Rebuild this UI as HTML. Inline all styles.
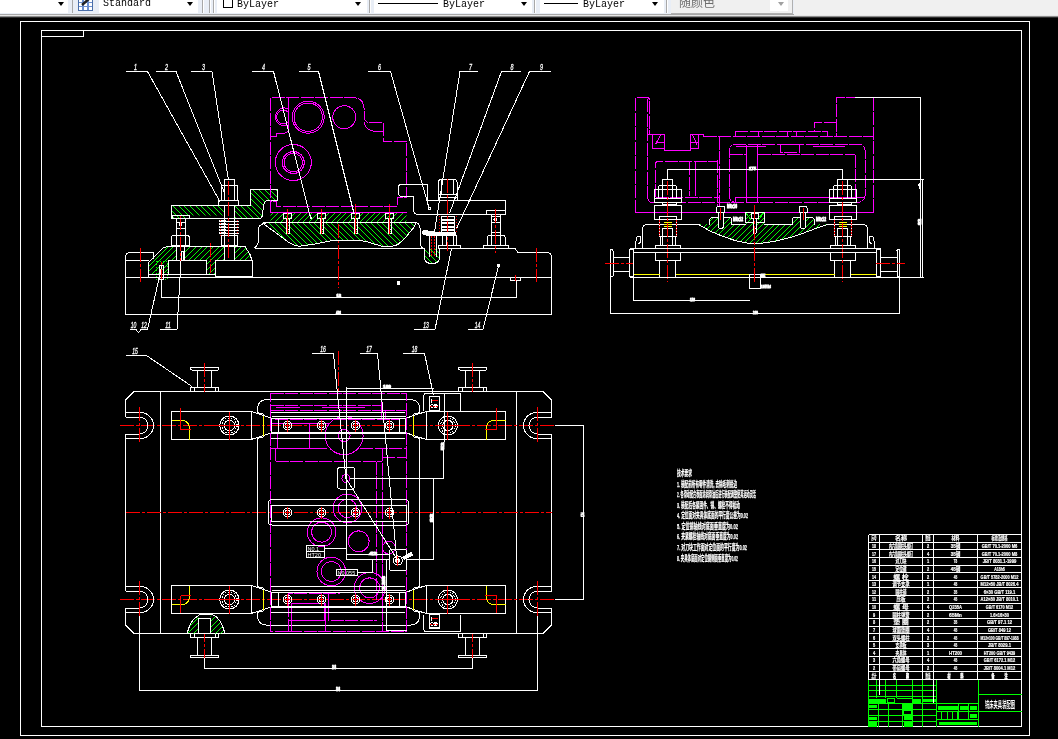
<!DOCTYPE html>
<html lang="zh"><head><meta charset="utf-8"><title>CAD</title>
<style>
html,body{margin:0;padding:0;background:#000;overflow:hidden}
body{width:1058px;height:739px;position:relative;font-family:"Liberation Mono","Noto Sans CJK SC",monospace}
#tb{position:absolute;left:0;top:0;width:1058px;height:15px;background:#f0f0f0;overflow:hidden}
#tbl{position:absolute;left:0;top:0;width:794px;height:14px;background:#e9eef6;border-bottom:1px solid #a8a8a8}
#tbs{position:absolute;left:0;top:15px;width:1058px;height:3px;background:linear-gradient(#e6e6e6 0,#e6e6e6 33.3%,#8c8c8c 33.3%,#8c8c8c 66.6%,#2c2c2c 66.6%)}
.cb{position:absolute;top:-8px;height:21px;background:#fff;border:0 solid #e3e3e3;box-sizing:border-box;font-size:10px;line-height:10px;color:#000;white-space:nowrap}
.cb span{position:absolute;top:7px;filter:grayscale(1)}
.ar{position:absolute;top:2px;width:0;height:0;border-left:3.5px solid transparent;border-right:3.5px solid transparent;border-top:4px solid #000}
.sep{position:absolute;top:0;width:1px;height:13px;background:#a8a8a8}
.ln{position:absolute;top:11px;height:1px;background:#000}
svg{position:absolute;left:0;top:0}
svg path,svg rect,svg circle{fill:none;stroke-width:1;shape-rendering:crispEdges}
svg text{font-family:"Liberation Sans","Noto Sans CJK SC",sans-serif;stroke:none;filter:grayscale(1)}
.w{stroke:#fff}.m{stroke:#f0f}.r{stroke:#f00}.g{stroke:#0f0}.y{stroke:#ff0}
.md{stroke-dasharray:13 1.5}
.cl{stroke-dasharray:14 2 3 2}
.dot{stroke-dasharray:1.5 1.5}
</style></head><body>
<svg width="1058" height="739" viewBox="0 0 1058 739">
<defs>
<pattern id="hf" width="5.5" height="5.5" patternUnits="userSpaceOnUse"><path d="M-1 6.5L6.5 -1M-1 1L1 -1M4.5 6.5L6.5 4.5" style="stroke:#0f0;stroke-width:1;shape-rendering:crispEdges"/></pattern>
<pattern id="hb" width="5.5" height="5.5" patternUnits="userSpaceOnUse"><path d="M-1 -1L6.5 6.5M4.5 -1L6.5 1M-1 4.5L1 6.5" style="stroke:#0f0;stroke-width:1;shape-rendering:crispEdges"/></pattern>
</defs>
<g id="frame">
<rect class="w" x="20.5" y="21.5" width="1009" height="714"/>
<rect class="w" x="41.5" y="30.5" width="980" height="696"/>
<rect class="w" x="41.5" y="30.5" width="42" height="6"/>
</g>
<g id="front">
<clipPath id="hc1"><path d="M171.5 205.5H224V215.5H189.5V218.5H171.5Z M234.5 205.5H250V190.5Q250.5 189.5 252 189.5H277.5V200.5H268Q264 201 263.5 206L262.5 215Q262 218.5 259 218.5H234.5Z" style="stroke:none"/></clipPath>
<path class="g" clip-path="url(#hc1)" d="M133 189L163 219M139 189L169 219M145 189L175 219M150 189L180 219M156 189L186 219M162 189L192 219M167 189L197 219M173 189L203 219M179 189L209 219M184 189L214 219M190 189L220 219M196 189L226 219M201 189L231 219M207 189L237 219M213 189L243 219M218 189L248 219M224 189L254 219M230 189L260 219M235 189L265 219M241 189L271 219M247 189L277 219M252 189L282 219M258 189L288 219M264 189L294 219M269 189L299 219M275 189L305 219M281 189L311 219M286 189L316 219M292 189L322 219M298 189L328 219M303 189L333 219M309 189L339 219M315 189L345 219"/>
<clipPath id="hc2"><path d="M148.5 274V262.5L163 248L167 246.5H176.5V260H168.5V274Z M184.5 246.5H224V260H184.5Z M234.5 246.5H245L250 254.5V260H234.5Z M206 260H215.5V274H206Z" style="stroke:none"/></clipPath>
<path class="g" clip-path="url(#hc2)" d="M111 275L140 246M117 275L146 246M123 275L152 246M128 275L157 246M134 275L163 246M140 275L169 246M145 275L174 246M151 275L180 246M157 275L186 246M162 275L191 246M168 275L197 246M174 275L203 246M179 275L208 246M185 275L214 246M191 275L220 246M196 275L225 246M202 275L231 246M208 275L237 246M213 275L242 246M219 275L248 246M225 275L254 246M230 275L259 246M236 275L265 246M242 275L271 246M247 275L276 246M253 275L282 246M259 275L288 246M264 275L293 246M270 275L299 246M276 275L305 246M281 275L310 246M287 275L316 246"/>
<clipPath id="hc3"><path d="M270.5 212.5H406.5V222.5H270.5Z" style="stroke:none"/></clipPath>
<path class="g" clip-path="url(#hc3)" d="M251 223L262 212M257 223L268 212M263 223L274 212M268 223L279 212M274 223L285 212M280 223L291 212M285 223L296 212M291 223L302 212M297 223L308 212M302 223L313 212M308 223L319 212M314 223L325 212M319 223L330 212M325 223L336 212M331 223L342 212M336 223L347 212M342 223L353 212M348 223L359 212M353 223L364 212M359 223L370 212M365 223L376 212M370 223L381 212M376 223L387 212M382 223L393 212M387 223L398 212M393 223L404 212M399 223L410 212M404 223L415 212M410 223L421 212M416 223L427 212M421 223L432 212"/>
<clipPath id="hc4"><path d="M262.5 222.5L289 242.5Q294 245.5 299.5 246.3L318 243.5Q328 240.5 338.5 240.3H359Q367 241 376 244.6L384.5 246.8Q392 247 398 244.6Q406 238 413.3 228L416.5 222.5Z" style="stroke:none"/></clipPath>
<path class="g" clip-path="url(#hc4)" d="M228 222L254 248M234 222L260 248M240 222L266 248M245 222L271 248M251 222L277 248M257 222L283 248M262 222L288 248M268 222L294 248M274 222L300 248M279 222L305 248M285 222L311 248M291 222L317 248M296 222L322 248M302 222L328 248M308 222L334 248M313 222L339 248M319 222L345 248M325 222L351 248M330 222L356 248M336 222L362 248M342 222L368 248M347 222L373 248M353 222L379 248M359 222L385 248M364 222L390 248M370 222L396 248M376 222L402 248M381 222L407 248M387 222L413 248M393 222L419 248M398 222L424 248M404 222L430 248M410 222L436 248M415 222L441 248M421 222L447 248M427 222L453 248M432 222L458 248M438 222L464 248M444 222L470 248M449 222L475 248"/>
<clipPath id="hc5"><path d="M424.5 248V258Q425 263.5 432 263.5Q439 263.5 439.5 258V248Z" style="stroke:none"/></clipPath>
<path class="g" clip-path="url(#hc5)" d="M399 247L416 264M405 247L422 264M411 247L428 264M416 247L433 264M422 247L439 264M428 247L445 264M433 247L450 264M439 247L456 264M445 247L462 264M450 247L467 264M456 247L473 264M462 247L479 264"/>
<path class="w" d="M125.5 314.5L125.5 256L126.5 253.5L129 252.5L153.5 252.5L153.5 259"/>
<path class="w" d="M125.5 260.5L148.5 260.5"/>
<path class="w" d="M125.5 277.5L551.5 277.5"/>
<path class="w" d="M125.5 314.5L551.5 314.5"/>
<path class="w" d="M161.5 279L161.5 297.5"/>
<path class="w" d="M161.5 297.5L516.5 297.5"/>
<path class="w" d="M516.5 280.5L516.5 297.5"/>
<path class="w" d="M551.5 314.5L551.5 256L550.5 253.5L548 252.5L518 252.5L516.5 250.5L515 248.5L508.5 248.5"/>
<path class="w" d="M254.5 248.5L424.5 248.5"/>
<path class="w" d="M439.5 248.5L460.5 248.5"/>
<path class="w" d="M460.5 248.5L483.5 248.5"/>
<rect class="w" x="510.5" y="277.5" width="10" height="3"/>
<path class="r" d="M515.5 275L515.5 280.5"/>
<path class="w" d="M397 281.5h3 M398.5 281.5v3"/>
<circle class="w" cx="398.2" cy="283.6" r="1.2" style="fill:#fff"/>
<text x="336.5" y="297" font-size="3.57" fill="#fff" textLength="4.5" lengthAdjust="spacingAndGlyphs" font-weight="bold" style="stroke:#fff;stroke-width:.9">18</text>
<text x="336" y="314" font-size="4.29" fill="#fff" textLength="5" lengthAdjust="spacingAndGlyphs" font-weight="bold" style="stroke:#fff;stroke-width:.9">426</text>
<path class="r cl" d="M140.5 248L140.5 282"/>
<path class="r cl" d="M536.5 247.5L536.5 282"/>
<path class="r cl" d="M338.5 224L338.5 288"/>
<path class="r cl" d="M210.5 242.5L210.5 273"/>
<path class="w" d="M148.5 276.5L148.5 262.5L163 248L167 246.5L245 246.5L250 254.5L252.5 262L252.5 276.5"/>
<rect class="w" x="168.5" y="260.5" width="37.5" height="13.5"/>
<rect class="w" x="215.5" y="260.5" width="37" height="16"/>
<path class="w" d="M148.5 274L168.5 274"/>
<path class="w" d="M206 274L215.5 274"/>
<rect class="g dot" x="156.5" y="261" width="10.5" height="18.5"/>
<rect class="w" x="159.5" y="265" width="4" height="14"/>
<path class="r" d="M161.5 262L161.5 279"/>
<rect class="w" x="172.5" y="215.5" width="17" height="3"/>
<rect class="w" x="176.5" y="218.5" width="9" height="16.5"/>
<path class="w" d="M176.5 222L185.5 222"/>
<path class="w" d="M176.5 228L185.5 228"/>
<rect class="w" x="179.5" y="223.5" width="2" height="2"/>
<path class="w" d="M171.5 245.5L171.5 237L173 235L188 235L189.5 237L189.5 245.5Z"/>
<path class="w" d="M176.5 235L176.5 245.5"/>
<path class="w" d="M185.5 235L185.5 245.5"/>
<path class="w" d="M176.5 246.5L176.5 260"/>
<path class="w" d="M184.5 246.5L184.5 260"/>
<rect class="w" x="181.5" y="251.5" width="2" height="8.5"/>
<path class="r cl" d="M180.5 216L180.5 262"/>
<path class="w" d="M171.5 205.5H250V190.5Q250.5 189.5 252 189.5H276Q277.5 189.5 277.5 191V200.5H268Q264 201 263.5 206L262.5 215Q262 218.5 259 218.5H171.5Z"/>
<path class="w" d="M224 185.5V181Q224 179.5 225.5 179.5H233Q234.5 179.5 234.5 181V185.5"/>
<rect class="w" x="221.5" y="185.5" width="15.5" height="14.5"/>
<path class="w" d="M224 185.5L224 200"/>
<path class="w" d="M234.5 185.5L234.5 200"/>
<rect class="w" x="218.5" y="200" width="20" height="5.5"/>
<path class="w" d="M224 205.5L224 218.5"/>
<path class="w" d="M234.5 205.5L234.5 218.5"/>
<path class="w" d="M219.5 220.5L238.5 222"/>
<path class="w" d="M219.5 222L238.5 221.5"/>
<path class="w" d="M219.5 223.5L238.5 225"/>
<path class="w" d="M219.5 225L238.5 224.5"/>
<path class="w" d="M219.5 226.5L238.5 228"/>
<path class="w" d="M219.5 228L238.5 227.5"/>
<path class="w" d="M219.5 229.5L238.5 231"/>
<path class="w" d="M219.5 231L238.5 230.5"/>
<path class="w" d="M219.5 232.5L238.5 234"/>
<path class="w" d="M219.5 234L238.5 233.5"/>
<path class="r dot" d="M220.5 219.5L220.5 235.5"/>
<path class="r dot" d="M237.5 219.5L237.5 235.5"/>
<path class="w" d="M224 218.5L224 235.5"/>
<path class="w" d="M234.5 218.5L234.5 235.5"/>
<rect class="w" x="221.5" y="235.5" width="15.5" height="10"/>
<path class="w" d="M224 235.5L224 245.5"/>
<path class="w" d="M234.5 235.5L234.5 245.5"/>
<rect class="w" x="224" y="246.5" width="10.5" height="13.5"/>
<path class="r cl" d="M228.5 180.5L228.5 258.5"/>
<path class="w" d="M270.5 222.5H267L261.5 224.5Q258 226.5 258 230V243Q257.5 246 254.5 248"/>
<path class="w" d="M262.5 222.5L416.5 222.5"/>
<path class="w" d="M262.5 223L289 242.5Q294 245.5 299.5 246.3L318 243.5Q328 240.5 338.5 240.3H359Q367 241 376 244.6L384.5 246.8Q392 247 398 244.6Q406 238 413.3 228L416.5 222.5"/>
<rect class="w" x="283.5" y="213.5" width="8" height="5"/>
<rect class="w" x="286" y="218.5" width="3" height="15"/>
<path class="w" d="M286 229.5L289 229.5"/>
<path class="r" d="M287.5 208.5L287.5 233.5"/>
<rect class="w" x="317.5" y="213.5" width="8" height="5"/>
<rect class="w" x="320" y="218.5" width="3" height="15"/>
<path class="w" d="M320 229.5L323 229.5"/>
<path class="r" d="M321.5 208.5L321.5 233.5"/>
<rect class="w" x="351.5" y="213.5" width="8" height="5"/>
<rect class="w" x="354" y="218.5" width="3" height="15"/>
<path class="w" d="M354 229.5L357 229.5"/>
<path class="r" d="M355.5 204L355.5 233.5"/>
<rect class="w" x="385.5" y="213.5" width="8" height="5"/>
<rect class="w" x="388" y="218.5" width="3" height="15"/>
<path class="w" d="M388 229.5L391 229.5"/>
<path class="r" d="M389.5 204L389.5 233.5"/>
<path class="m md" d="M270.5 212.5V97.5H353Q363.5 98 364 108V117Q364.5 122 369 122.5H383V141.5H406.5V197.5H397.5V206.5H276.5V201.5H270.5"/>
<path class="m" d="M270.5 212.5L406.5 212.5"/>
<path class="m" d="M288.5 97.5L288.5 130.5"/>
<path class="m" d="M270.5 136.5H276V133.5H283Q287.5 133 288.5 130.5"/>
<path class="m" d="M364 122.5Q366 130 373 131H382.5"/>
<path class="m" d="M289.5 109.5A9 9 0 1 0 288.5 125"/>
<path class="m" d="M288.5 112.5A6.8 6.8 0 1 0 288.5 121.5"/>
<circle class="m" cx="308.2" cy="117.2" r="16"/>
<circle class="m" cx="308.2" cy="117.2" r="14.2"/>
<circle class="m" cx="293.3" cy="162.5" r="18"/>
<circle class="m" cx="293.3" cy="162.5" r="11"/>
<circle class="m" cx="293.3" cy="162.5" r="9.2"/>
<circle class="m" cx="344.3" cy="117.2" r="11.5"/>
<path class="w" d="M427 184.5H401Q398 185 398 188V193Q398.5 196 402 196.5H413.5V210Q414 214.5 418 214.5H486.5V210.5H505.5V200.5H427Z"/>
<rect class="w" x="428" y="207" width="2" height="2"/>
<path class="w" d="M416.5 222.5Q419.5 224 420 228V243.5Q420.5 247 423.5 248.5"/>
<path class="w" d="M438.5 194.5V182Q438.5 179.5 441 179.5H454.5Q457 179.5 457 182V194.5Z"/>
<path class="w" d="M441.5 180L441.5 194.5"/>
<path class="w" d="M453.5 180L453.5 194.5"/>
<rect class="w" x="438.5" y="194.5" width="18.5" height="6"/>
<path class="w" d="M438.5 197L457 197"/>
<rect class="w" x="441.5" y="216.5" width="12.5" height="2.5"/>
<rect class="w" x="441.5" y="220" width="12.5" height="2.5"/>
<rect class="w" x="441.5" y="223.5" width="12.5" height="2.5"/>
<rect class="w" x="441.5" y="227" width="12.5" height="2.5"/>
<rect class="w" x="441.5" y="230.5" width="12.5" height="2.5"/>
<path class="r dot" d="M439.5 215.5L439.5 234"/>
<path class="r dot" d="M456 215.5L456 234"/>
<rect class="w" x="442.5" y="235.5" width="14" height="10"/>
<path class="w" d="M446 235.5L446 245.5"/>
<path class="w" d="M453 235.5L453 245.5"/>
<rect class="w" x="438.5" y="245.5" width="22" height="3"/>
<path class="r cl" d="M447.5 179L447.5 251"/>
<path class="w" d="M422 231.5Q424 230 428 231L437 232.5H455V235.5H437L428 235Q423 235.5 422 233Z" style="fill:#fff"/>
<path class="w" d="M424.5 248V258Q425 263.5 432 263.5Q439 263.5 439.5 258V248"/>
<path class="w" d="M429.5 235L429.5 257"/>
<path class="w" d="M436.5 235L436.5 257"/>
<path class="r dot" d="M431.5 236L431.5 257"/>
<path class="r dot" d="M434.5 236L434.5 257"/>
<rect class="w" x="486.5" y="210.5" width="19" height="4"/>
<rect class="w" x="491" y="214.5" width="9.5" height="20.5"/>
<path class="w" d="M491 216.5L500.5 216.5"/>
<path class="w" d="M491 222.5L500.5 222.5"/>
<path class="w" d="M491 232.5L500.5 232.5"/>
<circle class="w" cx="495.5" cy="219.5" r="1.5"/>
<path class="w" d="M487.5 245.5L487.5 237L489 235L503.5 235L505 237L505 245.5Z"/>
<path class="w" d="M491 235L491 245.5"/>
<path class="w" d="M500.5 235L500.5 245.5"/>
<rect class="w" x="483.5" y="245.5" width="25" height="3"/>
<path class="r cl" d="M495.5 209L495.5 253"/>
<path class="w" d="M125.5 71.5L147.5 71.5"/>
<path class="w" d="M147.5 71.5L220.5 202.5"/>
<text x="135.5" y="70" font-size="9" fill="#fff" text-anchor="middle" font-style="italic" textLength="3" lengthAdjust="spacingAndGlyphs" style="stroke:#fff;stroke-width:.3">1</text>
<path class="w" d="M155.5 71.5L176 71.5"/>
<path class="w" d="M176 71.5L224.5 193"/>
<text x="166.5" y="70" font-size="9" fill="#fff" text-anchor="middle" font-style="italic" textLength="3" lengthAdjust="spacingAndGlyphs" style="stroke:#fff;stroke-width:.3">2</text>
<path class="w" d="M190.5 71.5L212 71.5"/>
<path class="w" d="M212 71.5L228.5 180.5"/>
<text x="203.5" y="70" font-size="9" fill="#fff" text-anchor="middle" font-style="italic" textLength="3" lengthAdjust="spacingAndGlyphs" style="stroke:#fff;stroke-width:.3">3</text>
<path class="w" d="M252 71.5L273.5 71.5"/>
<path class="w" d="M273.5 71.5L310.5 217.5"/>
<text x="263.5" y="70" font-size="9" fill="#fff" text-anchor="middle" font-style="italic" textLength="3" lengthAdjust="spacingAndGlyphs" style="stroke:#fff;stroke-width:.3">4</text>
<path class="w" d="M298.5 71.5L318.5 71.5"/>
<path class="w" d="M318.5 71.5L354 213.5"/>
<text x="309" y="70" font-size="9" fill="#fff" text-anchor="middle" font-style="italic" textLength="3" lengthAdjust="spacingAndGlyphs" style="stroke:#fff;stroke-width:.3">5</text>
<path class="w" d="M368 71.5L390.5 71.5"/>
<path class="w" d="M390.5 71.5L429 208"/>
<text x="379.5" y="70" font-size="9" fill="#fff" text-anchor="middle" font-style="italic" textLength="3" lengthAdjust="spacingAndGlyphs" style="stroke:#fff;stroke-width:.3">6</text>
<path class="w" d="M477.5 71.5L460 71.5"/>
<path class="w" d="M460 71.5L434 235"/>
<text x="470.5" y="70" font-size="9" fill="#fff" text-anchor="middle" font-style="italic" textLength="3" lengthAdjust="spacingAndGlyphs" style="stroke:#fff;stroke-width:.3">7</text>
<path class="w" d="M521 71.5L501.5 71.5"/>
<path class="w" d="M501.5 71.5L449.5 213.5"/>
<text x="512" y="70" font-size="9" fill="#fff" text-anchor="middle" font-style="italic" textLength="3" lengthAdjust="spacingAndGlyphs" style="stroke:#fff;stroke-width:.3">8</text>
<path class="w" d="M551 71.5L529.5 71.5"/>
<path class="w" d="M529.5 71.5L456.5 228.5"/>
<text x="541.5" y="70" font-size="9" fill="#fff" text-anchor="middle" font-style="italic" textLength="3" lengthAdjust="spacingAndGlyphs" style="stroke:#fff;stroke-width:.3">9</text>
<rect x="309.5" y="216.5" width="2" height="2" style="fill:#ffffff;stroke:none"/>
<text x="133.5" y="328" font-size="9" fill="#fff" text-anchor="middle" font-style="italic" textLength="5.6" lengthAdjust="spacingAndGlyphs" style="stroke:#fff;stroke-width:.3">10</text>
<text x="144" y="328" font-size="9" fill="#fff" text-anchor="middle" font-style="italic" textLength="5.6" lengthAdjust="spacingAndGlyphs" style="stroke:#fff;stroke-width:.3">12</text>
<path class="w" d="M129.5 329.5L136 329.5L138.5 332.5L141 329.5L147.5 329.5"/>
<path class="w" d="M147.5 329.5L162 265"/>
<path class="w" d="M159.5 329.5L177 329.5"/>
<path class="w" d="M177 329.5L181.5 253"/>
<text x="168" y="328" font-size="9" fill="#fff" text-anchor="middle" font-style="italic" textLength="5.6" lengthAdjust="spacingAndGlyphs" style="stroke:#fff;stroke-width:.3">11</text>
<path class="w" d="M413.5 329.5L435 329.5"/>
<path class="w" d="M435 329.5L451.5 248.5"/>
<text x="426" y="328" font-size="9" fill="#fff" text-anchor="middle" font-style="italic" textLength="5.6" lengthAdjust="spacingAndGlyphs" style="stroke:#fff;stroke-width:.3">13</text>
<path class="w" d="M467.5 329.5L483 329.5"/>
<path class="w" d="M483 329.5L498.5 266"/>
<text x="477.5" y="328" font-size="9" fill="#fff" text-anchor="middle" font-style="italic" textLength="5.6" lengthAdjust="spacingAndGlyphs" style="stroke:#fff;stroke-width:.3">14</text>
<circle class="w" cx="498.5" cy="265.5" r="1" style="fill:#fff"/>
</g>
<g id="side">
<clipPath id="hc6"><path d="M698.5 224L710 231Q723 237 735 240.5Q746 243.5 755 243.8Q770 243 788.5 238Q802 234 813 229.5L827 224H813.5V219L812 217.5H794L792.5 219V224H764V212.5H745.5V224H731.5V219L730 217.5H711.5L710 219V224Z" style="stroke:none"/></clipPath>
<path class="g" clip-path="url(#hc6)" d="M658 244L690 212M664 244L696 212M670 244L702 212M675 244L707 212M681 244L713 212M687 244L719 212M692 244L724 212M698 244L730 212M704 244L736 212M709 244L741 212M715 244L747 212M721 244L753 212M726 244L758 212M732 244L764 212M738 244L770 212M743 244L775 212M749 244L781 212M755 244L787 212M760 244L792 212M766 244L798 212M772 244L804 212M777 244L809 212M783 244L815 212M789 244L821 212M794 244L826 212M800 244L832 212M806 244L838 212M811 244L843 212M817 244L849 212M823 244L855 212M828 244L860 212M834 244L866 212M840 244L872 212M845 244L877 212M851 244L883 212M857 244L889 212M862 244L894 212"/>
<path class="w" d="M646.5 224.5H698.5L710 231Q723 237 735 240.5Q746 243.5 755 243.8Q770 243 788.5 238Q802 234 813 229.5L827 224.5H863.5"/>
<path class="w" d="M731.5 224.5L745.5 224.5"/>
<path class="w" d="M764 224.5L792.5 224.5"/>
<path class="m md" d="M635.5 212.5V100Q635.5 97.5 638 97.5H647Q649.5 97.5 649.5 100V134"/>
<path class="m md" d="M647.5 99L647.5 199.5"/>
<path class="m md" d="M647.5 197Q648 202 652 202.5H857Q864.5 202 865 196V150Q864.5 145 860 144.5H735Q729.5 145 729.5 150V197Q730 201.5 734 201.5"/>
<path class="m" d="M635.5 212.5L873.5 212.5"/>
<path class="m md" d="M873.5 97.5L873.5 212.5"/>
<path class="m md" d="M873.5 97.5H836.5V136.5"/>
<path class="m md" d="M836.5 122.5H814.5V131.5"/>
<path class="m md" d="M735 131.5L827.5 131.5"/>
<path class="m" d="M735 131.5L735 136.5"/>
<path class="m" d="M758.5 131.5L758.5 136.5"/>
<path class="m" d="M787.5 131.5L787.5 136.5"/>
<path class="m" d="M796.5 131.5L796.5 136.5"/>
<path class="m" d="M827.5 131.5L827.5 136.5"/>
<path class="m md" d="M703.5 136.5L873.5 136.5"/>
<path class="m" d="M647.5 134.5L664.5 134.5"/>
<rect class="m" x="652.5" y="134.5" width="12" height="14"/>
<path class="m" d="M660.5 135L655.5 144.5"/>
<path class="m" d="M655.5 142.5L664.5 142.5"/>
<path class="m" d="M664.5 148.5L665 150.5H690V148.5"/>
<rect class="m" x="690" y="134.5" width="8.5" height="14"/>
<path class="m" d="M692.5 135L697 144.5"/>
<path class="m" d="M690 142.5L698.5 142.5"/>
<path class="m" d="M698.5 134.5H703.5V136.5"/>
<path class="m md" d="M719.5 136.5L719.5 207"/>
<path class="m md" d="M717.5 160L717.5 207"/>
<path class="m md" d="M655.5 197V164Q655.5 161.5 658 161.5H715Q717.5 161.5 717.5 164"/>
<path class="m md" d="M689.5 162L689.5 196"/>
<path class="m" d="M695.5 162L695.5 196"/>
<path class="m md" d="M655.5 197.5L719.5 197.5"/>
<path class="m" d="M735 197.5L865 197.5"/>
<path class="m" d="M746.5 145L746.5 201.5"/>
<path class="m" d="M757.5 145L757.5 201.5"/>
<path class="m md" d="M729.5 154.5L746.5 154.5"/>
<path class="m md" d="M757.5 154.5L855 154.5"/>
<path class="m md" d="M855 154.5L855 197.5"/>
<path class="m" d="M735.5 146.5L765.5 146.5"/>
<rect class="m md" x="780.5" y="144.5" width="19" height="7.5"/>
<path class="m" d="M813 146.5L844.5 146.5"/>
<path class="m" d="M735.5 197.5L735.5 201.5"/>
<path class="w" d="M667.5 169.5L842.5 169.5"/>
<path class="w" d="M667.5 169L667.5 179.5"/>
<path class="w" d="M842.5 169L842.5 179.5"/>
<text x="749" y="169.5" font-size="4.29" fill="#fff" textLength="7" lengthAdjust="spacingAndGlyphs" font-weight="bold" style="stroke:#fff;stroke-width:.9">175</text>
<path class="w" d="M855 97.5L920.5 97.5"/>
<path class="w" d="M920.5 97.5L920.5 277"/>
<path class="w" d="M922.5 179.5L922.5 277"/>
<path class="w" d="M836.5 179.5L924 179.5"/>
<text transform="translate(921 225) rotate(-90)" font-size="4.29" fill="#fff" textLength="6" lengthAdjust="spacingAndGlyphs" font-weight="bold" style="stroke:#fff;stroke-width:.9">82</text>
<path class="w" d="M918.5 185l2 -3v8Z" style="fill:#fff"/>
<rect class="w" x="662.5" y="179.5" width="10" height="5.5"/>
<path class="w" d="M658.5 189L658.5 186.5L660 185L675 185L676.5 186.5L676.5 189"/>
<rect class="w" x="654" y="189.5" width="27" height="12.5"/>
<path class="w" d="M658.5 189.5L658.5 198"/>
<path class="w" d="M676.5 189.5L676.5 198"/>
<path class="w" d="M654 198.5L681 198.5"/>
<rect class="w" x="662.5" y="202.5" width="14" height="1.5"/>
<rect class="w" x="654" y="205.5" width="27" height="14"/>
<rect class="w" x="659" y="216" width="17" height="20"/>
<path class="w" d="M662.5 179.5L662.5 198"/>
<path class="w" d="M672.5 179.5L672.5 198"/>
<path class="y" d="M663.5 222.5L671.5 222.5"/>
<path class="y" d="M663.5 224.5L671.5 224.5"/>
<path class="y" d="M663.5 226.5L671.5 226.5"/>
<path class="r dot" d="M659 220L659 236"/>
<path class="r dot" d="M676 220L676 236"/>
<rect class="w" x="662.5" y="228" width="10" height="8"/>
<path class="w" d="M660 236L660 245.5"/>
<path class="w" d="M662.5 236L662.5 245.5"/>
<path class="w" d="M672.5 236L672.5 245.5"/>
<path class="w" d="M675 236L675 245.5"/>
<rect class="w" x="655" y="245.5" width="25" height="3"/>
<rect class="w" x="655" y="252.5" width="25" height="8"/>
<path class="w" d="M659.5 260.5L659.5 277"/>
<path class="w" d="M675.5 260.5L675.5 277"/>
<path class="r cl" d="M667.5 180.5L667.5 282"/>
<rect class="w" x="837.5" y="179.5" width="10" height="5.5"/>
<path class="w" d="M833.5 189L833.5 186.5L835 185L850 185L851.5 186.5L851.5 189"/>
<rect class="w" x="829" y="189.5" width="27" height="12.5"/>
<path class="w" d="M833.5 189.5L833.5 198"/>
<path class="w" d="M851.5 189.5L851.5 198"/>
<path class="w" d="M829 198.5L856 198.5"/>
<rect class="w" x="837.5" y="202.5" width="14" height="1.5"/>
<rect class="w" x="829" y="205.5" width="27" height="14"/>
<rect class="w" x="834" y="216" width="17" height="20"/>
<path class="w" d="M837.5 179.5L837.5 198"/>
<path class="w" d="M847.5 179.5L847.5 198"/>
<path class="y" d="M838.5 222.5L846.5 222.5"/>
<path class="y" d="M838.5 224.5L846.5 224.5"/>
<path class="y" d="M838.5 226.5L846.5 226.5"/>
<path class="r dot" d="M834 220L834 236"/>
<path class="r dot" d="M851 220L851 236"/>
<rect class="w" x="837.5" y="228" width="10" height="8"/>
<path class="w" d="M835 236L835 245.5"/>
<path class="w" d="M837.5 236L837.5 245.5"/>
<path class="w" d="M847.5 236L847.5 245.5"/>
<path class="w" d="M850 236L850 245.5"/>
<rect class="w" x="830" y="245.5" width="25" height="3"/>
<rect class="w" x="830" y="252.5" width="25" height="8"/>
<path class="w" d="M834.5 260.5L834.5 277"/>
<path class="w" d="M850.5 260.5L850.5 277"/>
<path class="r cl" d="M842.5 180.5L842.5 282"/>
<path class="w" d="M642.5 248.5V229Q643 224.5 647 224.5"/>
<path class="w" d="M635.5 248.5V241 M636 241Q636.5 236 639 236Q641 236 641 240Q640.5 243 638.5 244"/>
<path class="w" d="M867.5 248.5V229Q867 224.5 863 224.5"/>
<path class="w" d="M874.5 248.5V241 M874 241Q873.5 236 871 236Q869 236 869 240Q869.5 243 871.5 244"/>
<path class="w" d="M629.5 248.5L880.5 248.5"/>
<path class="w" d="M633.5 252.5L876.5 252.5"/>
<path class="y" d="M633.5 274.5L659.5 274.5"/>
<path class="y" d="M675.5 274.5L834.5 274.5"/>
<path class="y" d="M850.5 274.5L876.5 274.5"/>
<path class="w" d="M629.5 277.5L924 277.5"/>
<rect class="w" x="629.5" y="249.5" width="4" height="27"/>
<rect class="w" x="613" y="257" width="16.5" height="14.5"/>
<rect class="w" x="610.5" y="249.5" width="2.5" height="27" rx="1"/>
<rect class="w" x="876.5" y="249.5" width="4" height="27"/>
<rect class="w" x="880.5" y="257" width="16.5" height="14.5"/>
<rect class="w" x="897" y="249.5" width="2.5" height="27" rx="1"/>
<path class="r cl" d="M605 263.5L634 263.5"/>
<path class="r cl" d="M876 263.5L905 263.5"/>
<path class="w" d="M633.5 252.5L633.5 300.5"/>
<path class="w" d="M610.5 276L610.5 314"/>
<path class="w" d="M899.5 276L899.5 314"/>
<path class="w" d="M633.5 300.5L750 300.5"/>
<path class="w" d="M610.5 313.5L899.5 313.5"/>
<text x="690" y="300.5" font-size="4.29" fill="#fff" textLength="5" lengthAdjust="spacingAndGlyphs" font-weight="bold" style="stroke:#fff;stroke-width:.9">118</text>
<text x="753" y="313.5" font-size="4.29" fill="#fff" textLength="5" lengthAdjust="spacingAndGlyphs" font-weight="bold" style="stroke:#fff;stroke-width:.9">290</text>
<rect class="w" x="749.5" y="274.5" width="11" height="13.5"/>
<text x="761" y="277" font-size="3.57" fill="#fff" textLength="4" lengthAdjust="spacingAndGlyphs" font-weight="bold" style="stroke:#fff;stroke-width:.9">5</text>
<text x="761" y="288" font-size="4.29" fill="#fff" textLength="10" lengthAdjust="spacingAndGlyphs" font-weight="bold" style="stroke:#fff;stroke-width:.9">18H7/h6</text>
<path class="w" d="M709.8 224.5L709.8 219L711.3 217.5L730.3 217.5L731.8 219L731.8 224.5"/>
<path class="w" d="M716.8 212.5V208Q716.8 206.5 718.3 206.5H723.3Q724.8 206.5 724.8 208V212.5Z" style="fill:#000"/>
<path class="w" d="M718.3 212.5V227L719.3 228.5H722.3L723.3 227V212.5Z" style="fill:#000"/>
<path class="r" d="M720.8 208L720.8 220"/>
<path class="w" d="M792 224.5L792 219L793.5 217.5L812.5 217.5L814 219L814 224.5"/>
<path class="w" d="M799 212.5V208Q799 206.5 800.5 206.5H805.5Q807 206.5 807 208V212.5Z" style="fill:#000"/>
<path class="w" d="M800.5 212.5V227L801.5 228.5H804.5L805.5 227V212.5Z" style="fill:#000"/>
<path class="r" d="M803 208L803 220"/>
<text x="727" y="207.5" font-size="5" fill="#fff" textLength="10" lengthAdjust="spacingAndGlyphs" font-weight="bold" style="stroke:#fff;stroke-width:.9">M6x16</text>
<text x="733" y="220.5" font-size="5" fill="#fff" textLength="10" lengthAdjust="spacingAndGlyphs" font-weight="bold" style="stroke:#fff;stroke-width:.9">M6x12</text>
<text x="816" y="220.5" font-size="5" fill="#fff" textLength="10" lengthAdjust="spacingAndGlyphs" font-weight="bold" style="stroke:#fff;stroke-width:.9">M6x12</text>
<rect class="w" x="745.5" y="212.5" width="18.5" height="10"/>
<path class="g" d="M746 213L751 220"/>
<path class="g" d="M763.5 213L758.5 220"/>
<rect class="w" x="751" y="213" width="7" height="5.5" style="fill:#000"/>
<path class="w" d="M753 218.5V232L754 233.5H755.5L756.5 232V218.5Z" style="fill:#000"/>
<path class="w" d="M753 228.5L756.5 228.5"/>
<path class="r cl" d="M754.5 205L754.5 282"/>
</g>
<g id="plan">
<path class="w" d="M125.5 417V400L134 391.5H543L551.5 400V417 M551.5 434V591 M551.5 608V625L543 633.5H134L125.5 625V608 M125.5 591V434"/>
<path class="w" d="M160.5 391.5L160.5 633.5"/>
<path class="w" d="M516.5 391.5L516.5 633.5"/>
<path class="r cl" d="M120 425.5L555 425.5"/>
<path class="r cl" d="M125.5 512.5L551.5 512.5"/>
<path class="r cl" d="M120 599.5L555 599.5"/>
<path class="r cl" d="M338.5 351L338.5 390.5"/>
<path class="w" d="M125.5 412.5H140.5A13 13 0 0 1 140.5 438.5H125.5"/>
<path class="w" d="M125.5 417H139.5A8.5 8.5 0 0 1 139.5 434H125.5"/>
<path class="r cl" d="M139.5 407L139.5 444"/>
<path class="w" d="M125.5 586.5H140.5A13 13 0 0 1 140.5 612.5H125.5"/>
<path class="w" d="M125.5 591H139.5A8.5 8.5 0 0 1 139.5 608H125.5"/>
<path class="r cl" d="M139.5 581L139.5 618"/>
<path class="w" d="M551.5 412.5H536.5A13 13 0 0 0 536.5 438.5H551.5"/>
<path class="w" d="M551.5 417H537.5A8.5 8.5 0 0 0 537.5 434H551.5"/>
<path class="r cl" d="M537.5 407L537.5 444"/>
<path class="w" d="M551.5 586.5H536.5A13 13 0 0 0 536.5 612.5H551.5"/>
<path class="w" d="M551.5 591H537.5A8.5 8.5 0 0 0 537.5 608H551.5"/>
<path class="r cl" d="M537.5 581L537.5 618"/>
<path class="w" d="M257.5 412.5V409Q258 400 266 399.5H411Q419.5 400 419.5 409V412.5"/>
<path class="w" d="M257.5 612.5V616Q258 624.5 266 625H411Q419.5 624.5 419.5 616V612.5"/>
<path class="w" d="M257.5 438.5L257.5 586.5"/>
<path class="w" d="M419.5 438.5L419.5 586.5"/>
<rect class="w" x="171.5" y="411.5" width="79.5" height="28"/>
<path class="w" d="M251 411.5L263.5 415.5L270.5 418"/>
<path class="w" d="M251 439.5L263.5 435.5L270.5 433"/>
<path class="y" d="M263.5 415.5L263.5 435.5"/>
<path class="w" d="M257.5 412.5L263 414L266 417"/>
<path class="w" d="M257.5 438.5L263 437L266 434"/>
<circle class="w" cx="229.3" cy="425.5" r="9.6"/>
<circle class="w" cx="229.3" cy="425.5" r="5.2"/>
<path class="w dot" d="M237.6 425.5L233.45 432.69L225.15 432.69L221 425.5L225.15 418.31L233.45 418.31Z"/>
<path class="r" d="M229.3 411.5L229.3 439.5"/>
<path class="r" d="M218.3 425.5L240.3 425.5"/>
<rect class="w" x="426.2" y="411.5" width="79.5" height="28"/>
<path class="w" d="M426.2 411.5L413.7 415.5L406.7 418"/>
<path class="w" d="M426.2 439.5L413.7 435.5L406.7 433"/>
<path class="y" d="M413.7 415.5L413.7 435.5"/>
<path class="w" d="M419.7 412.5L414.2 414L411.2 417"/>
<path class="w" d="M419.7 438.5L414.2 437L411.2 434"/>
<circle class="w" cx="447.9" cy="425.5" r="9.6"/>
<circle class="w" cx="447.9" cy="425.5" r="5.2"/>
<path class="w dot" d="M456.2 425.5L452.05 432.69L443.75 432.69L439.6 425.5L443.75 418.31L452.05 418.31Z"/>
<path class="r" d="M447.9 411.5L447.9 439.5"/>
<path class="r" d="M436.9 425.5L458.9 425.5"/>
<rect class="w" x="171.5" y="585.5" width="79.5" height="28"/>
<path class="w" d="M251 585.5L263.5 589.5L270.5 592"/>
<path class="w" d="M251 613.5L263.5 609.5L270.5 607"/>
<path class="y" d="M263.5 589.5L263.5 609.5"/>
<path class="w" d="M257.5 586.5L263 588L266 591"/>
<path class="w" d="M257.5 612.5L263 611L266 608"/>
<circle class="w" cx="229.3" cy="599.5" r="9.6"/>
<circle class="w" cx="229.3" cy="599.5" r="5.2"/>
<path class="w dot" d="M237.6 599.5L233.45 606.69L225.15 606.69L221 599.5L225.15 592.31L233.45 592.31Z"/>
<path class="r" d="M229.3 585.5L229.3 613.5"/>
<path class="r" d="M218.3 599.5L240.3 599.5"/>
<rect class="w" x="426.2" y="585.5" width="79.5" height="28"/>
<path class="w" d="M426.2 585.5L413.7 589.5L406.7 592"/>
<path class="w" d="M426.2 613.5L413.7 609.5L406.7 607"/>
<path class="y" d="M413.7 589.5L413.7 609.5"/>
<path class="w" d="M419.7 586.5L414.2 588L411.2 591"/>
<path class="w" d="M419.7 612.5L414.2 611L411.2 608"/>
<circle class="w" cx="447.9" cy="599.5" r="9.6"/>
<circle class="w" cx="447.9" cy="599.5" r="5.2"/>
<path class="w dot" d="M456.2 599.5L452.05 606.69L443.75 606.69L439.6 599.5L443.75 592.31L452.05 592.31Z"/>
<path class="r" d="M447.9 585.5L447.9 613.5"/>
<path class="r" d="M436.9 599.5L458.9 599.5"/>
<path class="y" d="M171.5 420.5H182.5Q188.5 421 189.5 427.5V439.5"/>
<path class="r" d="M180.5 407.5L180.5 429.5"/>
<path class="r" d="M180.5 429.5L190.5 429.5"/>
<path class="y" d="M505.7 420.5H493.2Q487.2 421 486.2 427.5V439.5"/>
<path class="r" d="M496.7 407.5L496.7 429.5"/>
<path class="r" d="M496.7 429.5L485.2 429.5"/>
<path class="y" d="M171.5 604.5H182.5Q188.5 604 189.5 597.5V585.5"/>
<path class="r" d="M180.5 595.5L180.5 612.5"/>
<path class="r" d="M180.5 595.5L190.5 595.5"/>
<path class="y" d="M505.7 604.5H493.2Q487.2 604 486.2 597.5V585.5"/>
<path class="r" d="M496.7 595.5L496.7 612.5"/>
<path class="r" d="M496.7 595.5L485.2 595.5"/>
<rect class="w" x="190.5" y="387.5" width="28" height="4"/>
<path class="w" d="M197.5 387.5L197.5 370"/>
<path class="w" d="M211.5 387.5L211.5 370"/>
<path class="w" d="M194 391.5L194 387.5"/>
<path class="w" d="M215 391.5L215 387.5"/>
<rect class="w" x="190.5" y="367.5" width="28" height="2.5" rx="1"/>
<path class="r cl" d="M204.5 362.5L204.5 391.5"/>
<rect class="w" x="458.5" y="387.5" width="28" height="4"/>
<path class="w" d="M465.5 387.5L465.5 370"/>
<path class="w" d="M479.5 387.5L479.5 370"/>
<path class="w" d="M462 391.5L462 387.5"/>
<path class="w" d="M483 391.5L483 387.5"/>
<rect class="w" x="458.5" y="367.5" width="28" height="2.5" rx="1"/>
<path class="r cl" d="M472.5 362.5L472.5 391.5"/>
<rect class="w" x="190.5" y="633.5" width="28" height="4"/>
<path class="w" d="M197.5 637.5L197.5 655"/>
<path class="w" d="M211.5 637.5L211.5 655"/>
<path class="w" d="M194 633.5L194 637.5"/>
<path class="w" d="M215 633.5L215 637.5"/>
<rect class="w" x="190.5" y="655" width="28" height="2.5" rx="1"/>
<path class="r cl" d="M204.5 662.5L204.5 633.5"/>
<rect class="w" x="458.5" y="633.5" width="28" height="4"/>
<path class="w" d="M465.5 637.5L465.5 655"/>
<path class="w" d="M479.5 637.5L479.5 655"/>
<path class="w" d="M462 633.5L462 637.5"/>
<path class="w" d="M483 633.5L483 637.5"/>
<rect class="w" x="458.5" y="655" width="28" height="2.5" rx="1"/>
<path class="r cl" d="M472.5 662.5L472.5 633.5"/>
<clipPath id="hc7"><path d="M187.5 633.5L190 626Q192.5 620 198.5 616.5V633.5Z M210.5 633.5V615.5L216 617Q220 620 222.5 626L225 633.5Z" style="stroke:none"/></clipPath>
<path class="g" clip-path="url(#hc7)" d="M160 634L179 615M165 634L184 615M171 634L190 615M176 634L195 615M182 634L201 615M187 634L206 615M193 634L212 615M198 634L217 615M204 634L223 615M209 634L228 615M215 634L234 615M220 634L239 615M226 634L245 615M231 634L250 615M237 634L256 615M242 634L261 615M248 634L267 615"/>
<path class="w" d="M187 633.5L189.5 626Q192 620 197 616.5L200 614.5H212L216 616.5Q220 620 222.5 626L225 633.5"/>
<rect class="w" x="198.5" y="618.5" width="12" height="15"/>
<rect class="m md" x="270.5" y="393.5" width="136" height="238"/>
<path class="m md" d="M270.5 405.5L381.5 405.5"/>
<path class="m md" d="M270.5 410.5L381.5 410.5"/>
<path class="m" d="M276 407.5L300 407.5"/>
<path class="m" d="M322 407.5L365 407.5"/>
<path class="m" d="M381.5 393.5L381.5 420"/>
<path class="m md" d="M381.5 410.5L406.5 410.5"/>
<path class="m" d="M385.5 410.5L385.5 418"/>
<path class="m md" d="M275 419L400 419"/>
<path class="m" d="M272 423L330 423"/>
<path class="m" d="M277.5 433L277.5 448"/>
<path class="m" d="M309.5 423L309.5 448"/>
<path class="m" d="M270.5 448.5L327 448.5"/>
<path class="m md" d="M360 448.5L406 448.5"/>
<path class="m md" d="M275.5 448L275.5 461"/>
<path class="m md" d="M275.5 461.5L382 461.5"/>
<path class="m md" d="M376.5 461.5L376.5 600"/>
<path class="m md" d="M382 448L382 631.5"/>
<path class="m md" d="M382 457L406.5 457"/>
<circle class="m" cx="344.1" cy="435.6" r="19"/>
<circle class="m" cx="344.1" cy="435.6" r="6"/>
<circle class="m" cx="347.4" cy="508.4" r="14.3"/>
<circle class="m" cx="347.4" cy="508.4" r="9.2"/>
<circle class="m" cx="321.6" cy="532.2" r="14.3"/>
<circle class="m" cx="321.6" cy="532.2" r="10"/>
<circle class="m" cx="358.7" cy="541.3" r="10.4"/>
<circle class="m" cx="331.3" cy="571.5" r="14.3"/>
<circle class="m" cx="331.3" cy="571.5" r="10"/>
<circle class="m" cx="388.9" cy="547.7" r="6.4"/>
<circle class="m" cx="369.7" cy="587.9" r="15.5"/>
<circle class="m" cx="369.7" cy="587.9" r="10"/>
<circle class="m" cx="345.9" cy="478.3" r="4"/>
<path class="m md" d="M288.5 631.5V593.5H340"/>
<path class="m" d="M291.5 631.5V603H325V631.5"/>
<path class="m" d="M288.5 620.5L325 620.5"/>
<path class="m md" d="M328.5 593.5V620.5H377"/>
<path class="m md" d="M291.5 603L325 603"/>
<path class="m" d="M324.5 603L324.5 620"/>
<path class="w" d="M270.5 412.5L404.5 412.5"/>
<path class="w" d="M270.5 438.5L404.5 438.5"/>
<path class="w" d="M271.5 416.5L405.5 416.5"/>
<rect x="271.5" y="417.5" width="134" height="1.5" style="fill:#ffffff;stroke:none"/>
<rect x="271.5" y="432" width="134" height="1.5" style="fill:#ffffff;stroke:none"/>
<path class="w" d="M271.5 417.5L271.5 433.5"/>
<path class="w" d="M405.5 417.5L405.5 433.5"/>
<path class="w" d="M278 419L278 432"/>
<path class="w" d="M399 419L399 432"/>
<circle class="w" cx="287.5" cy="425.5" r="4.2"/>
<circle class="w" cx="287.5" cy="425.5" r="2.3"/>
<path class="r" d="M287.5 419.5L287.5 431.5"/>
<path class="r" d="M284.5 425.5L290.5 425.5"/>
<circle class="w" cx="321.4" cy="425.5" r="4.2"/>
<circle class="w" cx="321.4" cy="425.5" r="2.3"/>
<path class="r" d="M321.4 419.5L321.4 431.5"/>
<path class="r" d="M318.4 425.5L324.4 425.5"/>
<circle class="w" cx="355.4" cy="425.5" r="4.2"/>
<circle class="w" cx="355.4" cy="425.5" r="2.3"/>
<path class="r" d="M355.4 419.5L355.4 431.5"/>
<path class="r" d="M352.4 425.5L358.4 425.5"/>
<circle class="w" cx="389.4" cy="425.5" r="4.2"/>
<circle class="w" cx="389.4" cy="425.5" r="2.3"/>
<path class="r" d="M389.4 419.5L389.4 431.5"/>
<path class="r" d="M386.4 425.5L392.4 425.5"/>
<path class="w" d="M270.5 586.5L404.5 586.5"/>
<path class="w" d="M270.5 612.5L404.5 612.5"/>
<path class="w" d="M271.5 590.5L405.5 590.5"/>
<rect x="271.5" y="591.5" width="134" height="1.5" style="fill:#ffffff;stroke:none"/>
<rect x="271.5" y="606" width="134" height="1.5" style="fill:#ffffff;stroke:none"/>
<path class="w" d="M271.5 591.5L271.5 607.5"/>
<path class="w" d="M405.5 591.5L405.5 607.5"/>
<path class="w" d="M278 593L278 606"/>
<path class="w" d="M399 593L399 606"/>
<circle class="w" cx="287.5" cy="599.5" r="4.2"/>
<circle class="w" cx="287.5" cy="599.5" r="2.3"/>
<path class="r" d="M287.5 593.5L287.5 605.5"/>
<path class="r" d="M284.5 599.5L290.5 599.5"/>
<circle class="w" cx="321.4" cy="599.5" r="4.2"/>
<circle class="w" cx="321.4" cy="599.5" r="2.3"/>
<path class="r" d="M321.4 593.5L321.4 605.5"/>
<path class="r" d="M318.4 599.5L324.4 599.5"/>
<circle class="w" cx="355.4" cy="599.5" r="4.2"/>
<circle class="w" cx="355.4" cy="599.5" r="2.3"/>
<path class="r" d="M355.4 593.5L355.4 605.5"/>
<path class="r" d="M352.4 599.5L358.4 599.5"/>
<circle class="w" cx="389.4" cy="599.5" r="4.2"/>
<circle class="w" cx="389.4" cy="599.5" r="2.3"/>
<path class="r" d="M389.4 593.5L389.4 605.5"/>
<path class="r" d="M386.4 599.5L392.4 599.5"/>
<rect class="w" x="268.5" y="499.5" width="140" height="25.5" rx="3"/>
<rect class="w" x="271.5" y="505" width="135" height="16"/>
<circle class="w" cx="287.5" cy="512.5" r="4.2"/>
<circle class="w" cx="287.5" cy="512.5" r="2.3"/>
<path class="r" d="M287.5 506.5L287.5 518.5"/>
<path class="r" d="M284.5 512.5L290.5 512.5"/>
<circle class="w" cx="321.4" cy="512.5" r="4.2"/>
<circle class="w" cx="321.4" cy="512.5" r="2.3"/>
<path class="r" d="M321.4 506.5L321.4 518.5"/>
<path class="r" d="M318.4 512.5L324.4 512.5"/>
<circle class="w" cx="355.4" cy="512.5" r="4.2"/>
<circle class="w" cx="355.4" cy="512.5" r="2.3"/>
<path class="r" d="M355.4 506.5L355.4 518.5"/>
<path class="r" d="M352.4 512.5L358.4 512.5"/>
<circle class="w" cx="389.4" cy="512.5" r="4.2"/>
<circle class="w" cx="389.4" cy="512.5" r="2.3"/>
<path class="r" d="M389.4 506.5L389.4 518.5"/>
<path class="r" d="M386.4 512.5L392.4 512.5"/>
<path class="w" d="M346.5 388.5L433.5 388.5"/>
<path class="w" d="M346.5 386.5L346.5 559.5"/>
<text x="383" y="388" font-size="4.29" fill="#fff" textLength="8" lengthAdjust="spacingAndGlyphs" font-weight="bold" style="stroke:#fff;stroke-width:.9">100</text>
<path class="w" d="M346.5 554.5L390 554.5"/>
<path class="w" d="M346.5 559.5L390 559.5"/>
<text x="369" y="555" font-size="4.29" fill="#fff" textLength="8" lengthAdjust="spacingAndGlyphs" font-weight="bold" style="stroke:#fff;stroke-width:.9">42</text>
<rect class="w" x="337.5" y="467.5" width="17" height="21.5" rx="2.5"/>
<path class="w" d="M350 478.5L443.5 478.5"/>
<path class="w" d="M443.5 442L443.5 478.5"/>
<path class="w" d="M433 478.5L433 559.5"/>
<path class="w" d="M406 559.5L433 559.5"/>
<path class="w" d="M444 394L444 442"/>
<text transform="translate(443.5 450) rotate(-90)" font-size="4.29" fill="#fff" textLength="7.5" lengthAdjust="spacingAndGlyphs" font-weight="bold" style="stroke:#fff;stroke-width:.9">52</text>
<text transform="translate(433 522) rotate(-90)" font-size="4.29" fill="#fff" textLength="8" lengthAdjust="spacingAndGlyphs" font-weight="bold" style="stroke:#fff;stroke-width:.9">82</text>
<rect class="w" x="389.5" y="549.5" width="17" height="21" rx="2"/>
<circle class="w" cx="397.7" cy="560.5" r="4.6"/>
<circle class="w" cx="397.7" cy="560.5" r="2" style="fill:#fff"/>
<path class="r" d="M397.7 556L397.7 566"/>
<path class="w" d="M346 478.5L397.5 560"/>
<path class="w" d="M401 558.5L409 554.5"/>
<path class="w" d="M403 557L411 552.5L412.5 555L404.5 559Z" style="fill:#fff"/>
<rect class="w" x="306.5" y="545.5" width="17.5" height="12"/>
<path class="w" d="M306.5 551.5L324 551.5"/>
<text x="307.5" y="551" font-size="5.5" fill="#ffffff" text-anchor="start">N0.1</text>
<text x="307.5" y="557" font-size="5.5" fill="#ffffff" text-anchor="start">HT20</text>
<path class="w" d="M324 548.5L346.5 548.5"/>
<rect class="w" x="336.5" y="569.5" width="21" height="6"/>
<text x="337.5" y="575" font-size="5.5" fill="#ffffff" text-anchor="start">N0.055</text>
<path class="w" d="M357.5 572.5H372.5V559.5"/>
<text transform="translate(384.5 590) rotate(-90)" font-size="4.29" fill="#fff" textLength="14" lengthAdjust="spacingAndGlyphs" font-weight="bold" style="stroke:#fff;stroke-width:.9">2-M6</text>
<path class="w" d="M386 559.5L386 631"/>
<path class="w" d="M386 630.5L407 630.5"/>
<path class="w" d="M423.5 410.5V395.5Q424 393.5 426 393.5H460.5V410.5"/>
<rect class="w" x="429" y="396.5" width="10.5" height="14"/>
<path class="r" d="M431 400.5L438 400.5"/>
<path class="w" d="M431.5 398.5L431.5 402.5"/>
<circle class="w" cx="435.5" cy="406" r="1.8" style="fill:#fff"/>
<circle class="w" cx="432" cy="406" r="1.2"/>
<path class="r dot" d="M430 406L439 406"/>
<path class="w" d="M423.5 614.5V629.5Q424 631.5 426 631.5H460.5V614.5"/>
<rect class="w" x="429" y="614.5" width="10.5" height="14"/>
<path class="r" d="M431 618.5L438 618.5"/>
<path class="w" d="M431.5 616.5L431.5 620.5"/>
<circle class="w" cx="435.5" cy="624" r="1.8" style="fill:#fff"/>
<circle class="w" cx="432" cy="624" r="1.2"/>
<path class="r dot" d="M430 624L439 624"/>
<path class="w" d="M429 627.5L439.5 627.5"/>
<path class="w" d="M444 394L444 411.5"/>
<path class="w" d="M555 425.5L584 425.5"/>
<path class="w" d="M555 599.5L584 599.5"/>
<path class="w" d="M583.5 425.5L583.5 599.5"/>
<text transform="translate(583.5 517) rotate(-90)" font-size="4.29" fill="#fff" textLength="4.5" lengthAdjust="spacingAndGlyphs" font-weight="bold" style="stroke:#fff;stroke-width:.9">174</text>
<path class="w" d="M204.5 658L204.5 669"/>
<path class="w" d="M472.5 658L472.5 669"/>
<path class="w" d="M204.5 668.5L472.5 668.5"/>
<text x="332" y="668.5" font-size="5" fill="#fff" textLength="4" lengthAdjust="spacingAndGlyphs" font-weight="bold" style="stroke:#fff;stroke-width:.9">268</text>
<path class="w" d="M139.5 616L139.5 690.5"/>
<path class="w" d="M537.5 616L537.5 690.5"/>
<path class="w" d="M139.5 690.5L537.5 690.5"/>
<text x="336" y="690.5" font-size="5" fill="#fff" textLength="4" lengthAdjust="spacingAndGlyphs" font-weight="bold" style="stroke:#fff;stroke-width:.9">398</text>
<path class="w" d="M125.5 355.5L146.5 355.5"/>
<path class="w" d="M146.5 355.5L192 386.5"/>
<text x="135" y="354" font-size="9" fill="#fff" text-anchor="middle" font-style="italic" textLength="5.6" lengthAdjust="spacingAndGlyphs" style="stroke:#fff;stroke-width:.3">15</text>
<path class="w" d="M312 353.5L333.5 353.5"/>
<path class="w" d="M333.5 353.5L346 478.5"/>
<text x="323" y="352" font-size="9" fill="#fff" text-anchor="middle" font-style="italic" textLength="5.6" lengthAdjust="spacingAndGlyphs" style="stroke:#fff;stroke-width:.3">16</text>
<path class="w" d="M360 353.5L377.5 353.5"/>
<path class="w" d="M377.5 353.5L396.5 556"/>
<text x="369" y="352" font-size="9" fill="#fff" text-anchor="middle" font-style="italic" textLength="5.6" lengthAdjust="spacingAndGlyphs" style="stroke:#fff;stroke-width:.3">17</text>
<path class="w" d="M403 353.5L424.5 353.5"/>
<path class="w" d="M424.5 353.5L433.5 395"/>
<text x="414.5" y="352" font-size="9" fill="#fff" text-anchor="middle" font-style="italic" textLength="5.6" lengthAdjust="spacingAndGlyphs" style="stroke:#fff;stroke-width:.3">18</text>
</g>
<g id="table">
<path class="w" d="M868.5 534.5L1021.5 534.5"/>
<path class="w" d="M868.5 542.5L1021.5 542.5"/>
<path class="w" d="M868.5 549.5L1021.5 549.5"/>
<path class="w" d="M868.5 557.5L1021.5 557.5"/>
<path class="w" d="M868.5 565.5L1021.5 565.5"/>
<path class="w" d="M868.5 572.5L1021.5 572.5"/>
<path class="w" d="M868.5 580.5L1021.5 580.5"/>
<path class="w" d="M868.5 587.5L1021.5 587.5"/>
<path class="w" d="M868.5 595.5L1021.5 595.5"/>
<path class="w" d="M868.5 603.5L1021.5 603.5"/>
<path class="w" d="M868.5 610.5L1021.5 610.5"/>
<path class="w" d="M868.5 618.5L1021.5 618.5"/>
<path class="w" d="M868.5 626.5L1021.5 626.5"/>
<path class="w" d="M868.5 633.5L1021.5 633.5"/>
<path class="w" d="M868.5 641.5L1021.5 641.5"/>
<path class="w" d="M868.5 648.5L1021.5 648.5"/>
<path class="w" d="M868.5 656.5L1021.5 656.5"/>
<path class="w" d="M868.5 664.5L1021.5 664.5"/>
<path class="w" d="M868.5 671.5L1021.5 671.5"/>
<path class="w" d="M868.5 679.5L1021.5 679.5"/>
<path class="w" d="M868.5 534.5L868.5 679.5"/>
<path class="w" d="M879.5 534.5L879.5 679.5"/>
<path class="w" d="M922.5 534.5L922.5 679.5"/>
<path class="w" d="M933.5 534.5L933.5 679.5"/>
<path class="w" d="M977.5 534.5L977.5 679.5"/>
<text x="874" y="540.4" font-size="5.6" fill="#fff" text-anchor="middle" textLength="5" lengthAdjust="spacingAndGlyphs" font-weight="bold" style="stroke:#fff;stroke-width:.2">序号</text>
<text x="901" y="540.4" font-size="5.6" fill="#fff" text-anchor="middle" textLength="12" lengthAdjust="spacingAndGlyphs" font-weight="bold" style="stroke:#fff;stroke-width:.2">名称</text>
<text x="928" y="540.4" font-size="5.6" fill="#fff" text-anchor="middle" textLength="5" lengthAdjust="spacingAndGlyphs" font-weight="bold" style="stroke:#fff;stroke-width:.2">数量</text>
<text x="955.5" y="540.4" font-size="5.6" fill="#fff" text-anchor="middle" textLength="8" lengthAdjust="spacingAndGlyphs" font-weight="bold" style="stroke:#fff;stroke-width:.2">材料</text>
<text x="999.5" y="540.4" font-size="5.6" fill="#fff" text-anchor="middle" textLength="16" lengthAdjust="spacingAndGlyphs" font-weight="bold" style="stroke:#fff;stroke-width:.2">标准及规格</text>
<text x="874" y="548.03" font-size="5.6" fill="#fff" text-anchor="middle" textLength="4" lengthAdjust="spacingAndGlyphs" font-weight="bold" style="stroke:#fff;stroke-width:.2">18</text>
<text x="901" y="548.03" font-size="5.6" fill="#fff" text-anchor="middle" textLength="24" lengthAdjust="spacingAndGlyphs" font-weight="bold" style="stroke:#fff;stroke-width:.2">内六角圆柱头螺钉</text>
<text x="928" y="548.03" font-size="5.6" fill="#fff" text-anchor="middle" textLength="2.2" lengthAdjust="spacingAndGlyphs" font-weight="bold" style="stroke:#fff;stroke-width:.2">2</text>
<text x="955.5" y="548.03" font-size="5.6" fill="#fff" text-anchor="middle" textLength="9.6" lengthAdjust="spacingAndGlyphs" font-weight="bold" style="stroke:#fff;stroke-width:.2">35钢</text>
<text x="999.5" y="548.03" font-size="5.6" fill="#fff" text-anchor="middle" textLength="35.7" lengthAdjust="spacingAndGlyphs" font-weight="bold" style="stroke:#fff;stroke-width:.2">GB/T 70.1-2000 M6</text>
<text x="874" y="555.66" font-size="5.6" fill="#fff" text-anchor="middle" textLength="4" lengthAdjust="spacingAndGlyphs" font-weight="bold" style="stroke:#fff;stroke-width:.2">17</text>
<text x="901" y="555.66" font-size="5.6" fill="#fff" text-anchor="middle" textLength="24" lengthAdjust="spacingAndGlyphs" font-weight="bold" style="stroke:#fff;stroke-width:.2">内六角圆柱头螺钉</text>
<text x="928" y="555.66" font-size="5.6" fill="#fff" text-anchor="middle" textLength="2.2" lengthAdjust="spacingAndGlyphs" font-weight="bold" style="stroke:#fff;stroke-width:.2">4</text>
<text x="955.5" y="555.66" font-size="5.6" fill="#fff" text-anchor="middle" textLength="9.6" lengthAdjust="spacingAndGlyphs" font-weight="bold" style="stroke:#fff;stroke-width:.2">35钢</text>
<text x="999.5" y="555.66" font-size="5.6" fill="#fff" text-anchor="middle" textLength="35.7" lengthAdjust="spacingAndGlyphs" font-weight="bold" style="stroke:#fff;stroke-width:.2">GB/T 70.1-2000 M8</text>
<text x="874" y="563.29" font-size="5.6" fill="#fff" text-anchor="middle" textLength="4" lengthAdjust="spacingAndGlyphs" font-weight="bold" style="stroke:#fff;stroke-width:.2">16</text>
<text x="901" y="563.29" font-size="5.6" fill="#fff" text-anchor="middle" textLength="11" lengthAdjust="spacingAndGlyphs" font-weight="bold" style="stroke:#fff;stroke-width:.2">对刀块</text>
<text x="928" y="563.29" font-size="5.6" fill="#fff" text-anchor="middle" textLength="2.2" lengthAdjust="spacingAndGlyphs" font-weight="bold" style="stroke:#fff;stroke-width:.2">1</text>
<text x="955.5" y="563.29" font-size="5.6" fill="#fff" text-anchor="middle" textLength="3.5" lengthAdjust="spacingAndGlyphs" font-weight="bold" style="stroke:#fff;stroke-width:.2">T8</text>
<text x="999.5" y="563.29" font-size="5.6" fill="#fff" text-anchor="middle" textLength="33.6" lengthAdjust="spacingAndGlyphs" font-weight="bold" style="stroke:#fff;stroke-width:.2">JB/T 8031.1-1999</text>
<text x="874" y="570.92" font-size="5.6" fill="#fff" text-anchor="middle" textLength="4" lengthAdjust="spacingAndGlyphs" font-weight="bold" style="stroke:#fff;stroke-width:.2">15</text>
<text x="901" y="570.92" font-size="5.6" fill="#fff" text-anchor="middle" textLength="11" lengthAdjust="spacingAndGlyphs" font-weight="bold" style="stroke:#fff;stroke-width:.2">定位键</text>
<text x="928" y="570.92" font-size="5.6" fill="#fff" text-anchor="middle" textLength="2.2" lengthAdjust="spacingAndGlyphs" font-weight="bold" style="stroke:#fff;stroke-width:.2">2</text>
<text x="955.5" y="570.92" font-size="5.6" fill="#fff" text-anchor="middle" textLength="9.6" lengthAdjust="spacingAndGlyphs" font-weight="bold" style="stroke:#fff;stroke-width:.2">45钢</text>
<text x="999.5" y="570.92" font-size="5.6" fill="#fff" text-anchor="middle" textLength="10.5" lengthAdjust="spacingAndGlyphs" font-weight="bold" style="stroke:#fff;stroke-width:.2">A18h6</text>
<text x="874" y="578.55" font-size="5.6" fill="#fff" text-anchor="middle" textLength="4" lengthAdjust="spacingAndGlyphs" font-weight="bold" style="stroke:#fff;stroke-width:.2">14</text>
<text x="901" y="578.55" font-size="5.6" fill="#fff" text-anchor="middle" textLength="15" lengthAdjust="spacingAndGlyphs" font-weight="bold" style="stroke:#fff;stroke-width:.2">螺 栓</text>
<text x="928" y="578.55" font-size="5.6" fill="#fff" text-anchor="middle" textLength="2.2" lengthAdjust="spacingAndGlyphs" font-weight="bold" style="stroke:#fff;stroke-width:.2">2</text>
<text x="955.5" y="578.55" font-size="5.6" fill="#fff" text-anchor="middle" textLength="3.5" lengthAdjust="spacingAndGlyphs" font-weight="bold" style="stroke:#fff;stroke-width:.2">45</text>
<text x="999.5" y="578.55" font-size="5.6" fill="#fff" text-anchor="middle" textLength="37.8" lengthAdjust="spacingAndGlyphs" font-weight="bold" style="stroke:#fff;stroke-width:.2">GB/T 5782-2000 M12</text>
<text x="874" y="586.18" font-size="5.6" fill="#fff" text-anchor="middle" textLength="4" lengthAdjust="spacingAndGlyphs" font-weight="bold" style="stroke:#fff;stroke-width:.2">13</text>
<text x="901" y="586.18" font-size="5.6" fill="#fff" text-anchor="middle" textLength="17" lengthAdjust="spacingAndGlyphs" font-weight="bold" style="stroke:#fff;stroke-width:.2">调节支承</text>
<text x="928" y="586.18" font-size="5.6" fill="#fff" text-anchor="middle" textLength="2.2" lengthAdjust="spacingAndGlyphs" font-weight="bold" style="stroke:#fff;stroke-width:.2">1</text>
<text x="955.5" y="586.18" font-size="5.6" fill="#fff" text-anchor="middle" textLength="3.5" lengthAdjust="spacingAndGlyphs" font-weight="bold" style="stroke:#fff;stroke-width:.2">45</text>
<text x="999.5" y="586.18" font-size="5.6" fill="#fff" text-anchor="middle" textLength="37.8" lengthAdjust="spacingAndGlyphs" font-weight="bold" style="stroke:#fff;stroke-width:.2">M12×50 JB/T 8026.4</text>
<text x="874" y="593.81" font-size="5.6" fill="#fff" text-anchor="middle" textLength="4" lengthAdjust="spacingAndGlyphs" font-weight="bold" style="stroke:#fff;stroke-width:.2">12</text>
<text x="901" y="593.81" font-size="5.6" fill="#fff" text-anchor="middle" textLength="11" lengthAdjust="spacingAndGlyphs" font-weight="bold" style="stroke:#fff;stroke-width:.2">圆柱销</text>
<text x="928" y="593.81" font-size="5.6" fill="#fff" text-anchor="middle" textLength="2.2" lengthAdjust="spacingAndGlyphs" font-weight="bold" style="stroke:#fff;stroke-width:.2">2</text>
<text x="955.5" y="593.81" font-size="5.6" fill="#fff" text-anchor="middle" textLength="3.5" lengthAdjust="spacingAndGlyphs" font-weight="bold" style="stroke:#fff;stroke-width:.2">35</text>
<text x="999.5" y="593.81" font-size="5.6" fill="#fff" text-anchor="middle" textLength="31.5" lengthAdjust="spacingAndGlyphs" font-weight="bold" style="stroke:#fff;stroke-width:.2">6×30 GB/T 119.1</text>
<text x="874" y="601.44" font-size="5.6" fill="#fff" text-anchor="middle" textLength="4" lengthAdjust="spacingAndGlyphs" font-weight="bold" style="stroke:#fff;stroke-width:.2">11</text>
<text x="901" y="601.44" font-size="5.6" fill="#fff" text-anchor="middle" textLength="9" lengthAdjust="spacingAndGlyphs" font-weight="bold" style="stroke:#fff;stroke-width:.2">压板</text>
<text x="928" y="601.44" font-size="5.6" fill="#fff" text-anchor="middle" textLength="2.2" lengthAdjust="spacingAndGlyphs" font-weight="bold" style="stroke:#fff;stroke-width:.2">2</text>
<text x="955.5" y="601.44" font-size="5.6" fill="#fff" text-anchor="middle" textLength="3.5" lengthAdjust="spacingAndGlyphs" font-weight="bold" style="stroke:#fff;stroke-width:.2">45</text>
<text x="999.5" y="601.44" font-size="5.6" fill="#fff" text-anchor="middle" textLength="37.8" lengthAdjust="spacingAndGlyphs" font-weight="bold" style="stroke:#fff;stroke-width:.2">A12×80 JB/T 8010.1</text>
<text x="874" y="609.07" font-size="5.6" fill="#fff" text-anchor="middle" textLength="4" lengthAdjust="spacingAndGlyphs" font-weight="bold" style="stroke:#fff;stroke-width:.2">10</text>
<text x="901" y="609.07" font-size="5.6" fill="#fff" text-anchor="middle" textLength="15" lengthAdjust="spacingAndGlyphs" font-weight="bold" style="stroke:#fff;stroke-width:.2">螺 母</text>
<text x="928" y="609.07" font-size="5.6" fill="#fff" text-anchor="middle" textLength="2.2" lengthAdjust="spacingAndGlyphs" font-weight="bold" style="stroke:#fff;stroke-width:.2">4</text>
<text x="955.5" y="609.07" font-size="5.6" fill="#fff" text-anchor="middle" textLength="13" lengthAdjust="spacingAndGlyphs" font-weight="bold" style="stroke:#fff;stroke-width:.2">Q235A</text>
<text x="999.5" y="609.07" font-size="5.6" fill="#fff" text-anchor="middle" textLength="27.3" lengthAdjust="spacingAndGlyphs" font-weight="bold" style="stroke:#fff;stroke-width:.2">GB/T 6170 M12</text>
<text x="874" y="616.7" font-size="5.6" fill="#fff" text-anchor="middle" textLength="2.2" lengthAdjust="spacingAndGlyphs" font-weight="bold" style="stroke:#fff;stroke-width:.2">9</text>
<text x="901" y="616.7" font-size="5.6" fill="#fff" text-anchor="middle" textLength="17" lengthAdjust="spacingAndGlyphs" font-weight="bold" style="stroke:#fff;stroke-width:.2">圆柱弹簧</text>
<text x="928" y="616.7" font-size="5.6" fill="#fff" text-anchor="middle" textLength="2.2" lengthAdjust="spacingAndGlyphs" font-weight="bold" style="stroke:#fff;stroke-width:.2">2</text>
<text x="955.5" y="616.7" font-size="5.6" fill="#fff" text-anchor="middle" textLength="12.8" lengthAdjust="spacingAndGlyphs" font-weight="bold" style="stroke:#fff;stroke-width:.2">65Mn</text>
<text x="999.5" y="616.7" font-size="5.6" fill="#fff" text-anchor="middle" textLength="18.9" lengthAdjust="spacingAndGlyphs" font-weight="bold" style="stroke:#fff;stroke-width:.2">1.6×16×30</text>
<text x="874" y="624.33" font-size="5.6" fill="#fff" text-anchor="middle" textLength="2.2" lengthAdjust="spacingAndGlyphs" font-weight="bold" style="stroke:#fff;stroke-width:.2">8</text>
<text x="901" y="624.33" font-size="5.6" fill="#fff" text-anchor="middle" textLength="15" lengthAdjust="spacingAndGlyphs" font-weight="bold" style="stroke:#fff;stroke-width:.2">垫 圈</text>
<text x="928" y="624.33" font-size="5.6" fill="#fff" text-anchor="middle" textLength="2.2" lengthAdjust="spacingAndGlyphs" font-weight="bold" style="stroke:#fff;stroke-width:.2">2</text>
<text x="955.5" y="624.33" font-size="5.6" fill="#fff" text-anchor="middle" textLength="3.5" lengthAdjust="spacingAndGlyphs" font-weight="bold" style="stroke:#fff;stroke-width:.2">35</text>
<text x="999.5" y="624.33" font-size="5.6" fill="#fff" text-anchor="middle" textLength="25.2" lengthAdjust="spacingAndGlyphs" font-weight="bold" style="stroke:#fff;stroke-width:.2">GB/T 97.1 12</text>
<text x="874" y="631.96" font-size="5.6" fill="#fff" text-anchor="middle" textLength="2.2" lengthAdjust="spacingAndGlyphs" font-weight="bold" style="stroke:#fff;stroke-width:.2">7</text>
<text x="901" y="631.96" font-size="5.6" fill="#fff" text-anchor="middle" textLength="17" lengthAdjust="spacingAndGlyphs" font-weight="bold" style="stroke:#fff;stroke-width:.2">球面垫圈</text>
<text x="928" y="631.96" font-size="5.6" fill="#fff" text-anchor="middle" textLength="2.2" lengthAdjust="spacingAndGlyphs" font-weight="bold" style="stroke:#fff;stroke-width:.2">4</text>
<text x="955.5" y="631.96" font-size="5.6" fill="#fff" text-anchor="middle" textLength="3.5" lengthAdjust="spacingAndGlyphs" font-weight="bold" style="stroke:#fff;stroke-width:.2">45</text>
<text x="999.5" y="631.96" font-size="5.6" fill="#fff" text-anchor="middle" textLength="23.1" lengthAdjust="spacingAndGlyphs" font-weight="bold" style="stroke:#fff;stroke-width:.2">GB/T 849 12</text>
<text x="874" y="639.59" font-size="5.6" fill="#fff" text-anchor="middle" textLength="2.2" lengthAdjust="spacingAndGlyphs" font-weight="bold" style="stroke:#fff;stroke-width:.2">6</text>
<text x="901" y="639.59" font-size="5.6" fill="#fff" text-anchor="middle" textLength="17" lengthAdjust="spacingAndGlyphs" font-weight="bold" style="stroke:#fff;stroke-width:.2">双头螺柱</text>
<text x="928" y="639.59" font-size="5.6" fill="#fff" text-anchor="middle" textLength="2.2" lengthAdjust="spacingAndGlyphs" font-weight="bold" style="stroke:#fff;stroke-width:.2">2</text>
<text x="955.5" y="639.59" font-size="5.6" fill="#fff" text-anchor="middle" textLength="3.5" lengthAdjust="spacingAndGlyphs" font-weight="bold" style="stroke:#fff;stroke-width:.2">45</text>
<text x="999.5" y="639.59" font-size="5.6" fill="#fff" text-anchor="middle" textLength="38" lengthAdjust="spacingAndGlyphs" font-weight="bold" style="stroke:#fff;stroke-width:.2">M12×100 GB/T 897-1988</text>
<text x="874" y="647.22" font-size="5.6" fill="#fff" text-anchor="middle" textLength="2.2" lengthAdjust="spacingAndGlyphs" font-weight="bold" style="stroke:#fff;stroke-width:.2">5</text>
<text x="901" y="647.22" font-size="5.6" fill="#fff" text-anchor="middle" textLength="11" lengthAdjust="spacingAndGlyphs" font-weight="bold" style="stroke:#fff;stroke-width:.2">支承板</text>
<text x="928" y="647.22" font-size="5.6" fill="#fff" text-anchor="middle" textLength="2.2" lengthAdjust="spacingAndGlyphs" font-weight="bold" style="stroke:#fff;stroke-width:.2">3</text>
<text x="955.5" y="647.22" font-size="5.6" fill="#fff" text-anchor="middle" textLength="3.5" lengthAdjust="spacingAndGlyphs" font-weight="bold" style="stroke:#fff;stroke-width:.2">45</text>
<text x="999.5" y="647.22" font-size="5.6" fill="#fff" text-anchor="middle" textLength="23.1" lengthAdjust="spacingAndGlyphs" font-weight="bold" style="stroke:#fff;stroke-width:.2">JB/T 8029.1</text>
<text x="874" y="654.85" font-size="5.6" fill="#fff" text-anchor="middle" textLength="2.2" lengthAdjust="spacingAndGlyphs" font-weight="bold" style="stroke:#fff;stroke-width:.2">4</text>
<text x="901" y="654.85" font-size="5.6" fill="#fff" text-anchor="middle" textLength="11" lengthAdjust="spacingAndGlyphs" font-weight="bold" style="stroke:#fff;stroke-width:.2">夹具体</text>
<text x="928" y="654.85" font-size="5.6" fill="#fff" text-anchor="middle" textLength="2.2" lengthAdjust="spacingAndGlyphs" font-weight="bold" style="stroke:#fff;stroke-width:.2">1</text>
<text x="955.5" y="654.85" font-size="5.6" fill="#fff" text-anchor="middle" textLength="13" lengthAdjust="spacingAndGlyphs" font-weight="bold" style="stroke:#fff;stroke-width:.2">HT200</text>
<text x="999.5" y="654.85" font-size="5.6" fill="#fff" text-anchor="middle" textLength="31.5" lengthAdjust="spacingAndGlyphs" font-weight="bold" style="stroke:#fff;stroke-width:.2">HT200 GB/T 9439</text>
<text x="874" y="662.48" font-size="5.6" fill="#fff" text-anchor="middle" textLength="2.2" lengthAdjust="spacingAndGlyphs" font-weight="bold" style="stroke:#fff;stroke-width:.2">3</text>
<text x="901" y="662.48" font-size="5.6" fill="#fff" text-anchor="middle" textLength="17" lengthAdjust="spacingAndGlyphs" font-weight="bold" style="stroke:#fff;stroke-width:.2">六角螺母</text>
<text x="928" y="662.48" font-size="5.6" fill="#fff" text-anchor="middle" textLength="2.2" lengthAdjust="spacingAndGlyphs" font-weight="bold" style="stroke:#fff;stroke-width:.2">4</text>
<text x="955.5" y="662.48" font-size="5.6" fill="#fff" text-anchor="middle" textLength="3.5" lengthAdjust="spacingAndGlyphs" font-weight="bold" style="stroke:#fff;stroke-width:.2">45</text>
<text x="999.5" y="662.48" font-size="5.6" fill="#fff" text-anchor="middle" textLength="31.5" lengthAdjust="spacingAndGlyphs" font-weight="bold" style="stroke:#fff;stroke-width:.2">GB/T 6172.1 M12</text>
<text x="874" y="670.11" font-size="5.6" fill="#fff" text-anchor="middle" textLength="2.2" lengthAdjust="spacingAndGlyphs" font-weight="bold" style="stroke:#fff;stroke-width:.2">2</text>
<text x="901" y="670.11" font-size="5.6" fill="#fff" text-anchor="middle" textLength="17" lengthAdjust="spacingAndGlyphs" font-weight="bold" style="stroke:#fff;stroke-width:.2">带肩螺母</text>
<text x="928" y="670.11" font-size="5.6" fill="#fff" text-anchor="middle" textLength="2.2" lengthAdjust="spacingAndGlyphs" font-weight="bold" style="stroke:#fff;stroke-width:.2">2</text>
<text x="955.5" y="670.11" font-size="5.6" fill="#fff" text-anchor="middle" textLength="3.5" lengthAdjust="spacingAndGlyphs" font-weight="bold" style="stroke:#fff;stroke-width:.2">45</text>
<text x="999.5" y="670.11" font-size="5.6" fill="#fff" text-anchor="middle" textLength="31.5" lengthAdjust="spacingAndGlyphs" font-weight="bold" style="stroke:#fff;stroke-width:.2">JB/T 8004.1 M12</text>
<text x="874" y="677.74" font-size="5.6" fill="#fff" text-anchor="middle" textLength="5" lengthAdjust="spacingAndGlyphs" font-weight="bold" style="stroke:#fff;stroke-width:.2">总计</text>
<text x="894.5" y="677.74" font-size="5.6" fill="#fff" text-anchor="middle" textLength="3" lengthAdjust="spacingAndGlyphs" font-weight="bold" style="stroke:#fff;stroke-width:.5">名</text>
<text x="907.5" y="677.74" font-size="5.6" fill="#fff" text-anchor="middle" textLength="3" lengthAdjust="spacingAndGlyphs" font-weight="bold" style="stroke:#fff;stroke-width:.5">称</text>
<text x="928" y="677.74" font-size="5.6" fill="#fff" text-anchor="middle" textLength="5" lengthAdjust="spacingAndGlyphs" font-weight="bold" style="stroke:#fff;stroke-width:.2">数量</text>
<text x="949" y="677.74" font-size="5.6" fill="#fff" text-anchor="middle" textLength="3" lengthAdjust="spacingAndGlyphs" font-weight="bold" style="stroke:#fff;stroke-width:.5">材</text>
<text x="962" y="677.74" font-size="5.6" fill="#fff" text-anchor="middle" textLength="3" lengthAdjust="spacingAndGlyphs" font-weight="bold" style="stroke:#fff;stroke-width:.5">料</text>
<text x="993" y="677.74" font-size="5.6" fill="#fff" text-anchor="middle" textLength="3" lengthAdjust="spacingAndGlyphs" font-weight="bold" style="stroke:#fff;stroke-width:.5">备</text>
<text x="1006" y="677.74" font-size="5.6" fill="#fff" text-anchor="middle" textLength="3" lengthAdjust="spacingAndGlyphs" font-weight="bold" style="stroke:#fff;stroke-width:.5">注</text>
<path class="g" d="M868.5 685.5L936.5 685.5"/>
<path class="g" d="M868.5 690.5L936.5 690.5"/>
<path class="g" d="M868.5 696.5L936.5 696.5"/>
<path class="g" d="M868.5 703.5L936.5 703.5"/>
<path class="g" d="M868.5 709.5L936.5 709.5"/>
<path class="g" d="M868.5 715.5L936.5 715.5"/>
<path class="g" d="M868.5 721.5L936.5 721.5"/>
<path class="g" d="M876.5 679.5L876.5 698"/>
<path class="g" d="M885.5 679.5L885.5 698"/>
<path class="g" d="M896.5 679.5L896.5 698"/>
<path class="g" d="M912.5 679.5L912.5 726.5"/>
<path class="g" d="M922.5 679.5L922.5 726.5"/>
<path class="g" d="M936.5 679.5L936.5 726.5"/>
<path class="g" d="M868.5 679.5L868.5 726.5"/>
<path class="g" d="M878.5 703.5L878.5 726.5"/>
<path class="g" d="M888.5 703.5L888.5 726.5"/>
<path class="g" d="M902.5 703.5L902.5 726.5"/>
<rect x="868.5" y="698.5" width="17" height="4" style="fill:#00ff00;stroke:none"/>
<rect class="g" x="887.5" y="698.5" width="7" height="4"/>
<path class="g" d="M897 698.5L912.5 698.5"/>
<rect x="912.5" y="698.5" width="8.5" height="4" style="fill:#00ff00;stroke:none"/>
<rect x="923" y="698.5" width="12.5" height="3.5" style="fill:#00ff00;stroke:none"/>
<rect x="869" y="705" width="8" height="3" style="fill:#00ff00;stroke:none"/>
<rect x="869" y="717" width="8" height="3" style="fill:#00ff00;stroke:none"/>
<rect x="869" y="721.5" width="8" height="5" style="fill:#00ff00;stroke:none"/>
<rect x="902.5" y="704" width="10" height="6" style="fill:#00ff00;stroke:none"/>
<rect class="g" x="903.5" y="710" width="8" height="4"/>
<rect x="904" y="715.5" width="8" height="4.5" style="fill:#00ff00;stroke:none"/>
<rect x="904" y="721.5" width="8" height="5" style="fill:#00ff00;stroke:none"/>
<path class="w" d="M879.5 679.5L879.5 694.5"/>
<path class="w" d="M933.5 679.5L933.5 702.5"/>
<path class="g" d="M978.5 679.5L978.5 726.5"/>
<path class="g" d="M936.5 703.5L978.5 703.5"/>
<path class="g" d="M936.5 711.5L978.5 711.5"/>
<path class="g" d="M936.5 719.5L978.5 719.5"/>
<path class="g" d="M958.5 703.5L958.5 719.5"/>
<path class="g" d="M968.5 703.5L968.5 719.5"/>
<path class="g" d="M941.5 711.5L941.5 719.5"/>
<path class="g" d="M947 711.5L947 719.5"/>
<path class="g" d="M952 711.5L952 719.5"/>
<path class="g" d="M957 711.5L957 719.5"/>
<rect x="938" y="705.5" width="19.5" height="4" style="fill:#00ff00;stroke:none"/>
<rect x="960" y="705.5" width="7.5" height="4" style="fill:#00ff00;stroke:none"/>
<rect x="970" y="705.5" width="7" height="4" style="fill:#00ff00;stroke:none"/>
<rect x="970" y="713.5" width="7" height="4" style="fill:#00ff00;stroke:none"/>
<rect x="939" y="721.5" width="38" height="3.5" style="fill:#00ff00;stroke:none"/>
<path class="g" d="M978.5 694.5L1021.5 694.5"/>
<path class="g" d="M978.5 711.5L1021.5 711.5"/>
<text x="1000" y="707.5" font-size="9" fill="#fff" text-anchor="middle" textLength="30" lengthAdjust="spacingAndGlyphs" font-weight="bold">铣床夹具装配图</text>
</g>
<g id="notes">
<text x="677" y="475.5" font-size="7.6" fill="#fff" textLength="15" lengthAdjust="spacingAndGlyphs" font-weight="bold" style="stroke:#fff;stroke-width:.25">技术要求</text>
<text x="677" y="486.5" font-size="7.6" fill="#fff" textLength="60" lengthAdjust="spacingAndGlyphs" font-weight="bold" style="stroke:#fff;stroke-width:.25">1. 装配前所有零件清洗, 去除毛刺锐边</text>
<text x="677" y="497" font-size="7.6" fill="#fff" textLength="79" lengthAdjust="spacingAndGlyphs" font-weight="bold" style="stroke:#fff;stroke-width:.25">2. 各滑动配合表面涂润滑油后进行装配调整使其运动灵活</text>
<text x="677" y="507.5" font-size="7.6" fill="#fff" textLength="63" lengthAdjust="spacingAndGlyphs" font-weight="bold" style="stroke:#fff;stroke-width:.25">3. 装配后各紧固件、销、螺栓不得松动</text>
<text x="677" y="518" font-size="7.6" fill="#fff" textLength="71" lengthAdjust="spacingAndGlyphs" font-weight="bold" style="stroke:#fff;stroke-width:.25">4. 定位面对夹具体底面的平行度公差为0.02</text>
<text x="677" y="528.5" font-size="7.6" fill="#fff" textLength="61" lengthAdjust="spacingAndGlyphs" font-weight="bold" style="stroke:#fff;stroke-width:.25">5. 定位销轴线对底面垂直度为0.02</text>
<text x="677" y="539" font-size="7.6" fill="#fff" textLength="61" lengthAdjust="spacingAndGlyphs" font-weight="bold" style="stroke:#fff;stroke-width:.25">6. 夹紧螺栓轴线对底面垂直度为0.02</text>
<text x="677" y="549.5" font-size="7.6" fill="#fff" textLength="70" lengthAdjust="spacingAndGlyphs" font-weight="bold" style="stroke:#fff;stroke-width:.25">7. 对刀块工作面对定位面的平行度为0.02</text>
<text x="677" y="560.5" font-size="7.6" fill="#fff" textLength="61" lengthAdjust="spacingAndGlyphs" font-weight="bold" style="stroke:#fff;stroke-width:.25">8. 夹具体底面对定位键侧面垂直度为0.02</text>
</g>
</svg>
<div id="tb"><div id="tbl"></div>
<div class="cb" style="left:-2px;width:70px"></div><div class="ar" style="left:58px;top:2px"></div>
<div class="sep" style="left:72px"></div>
<svg width="16" height="12" style="left:78px;top:0" viewBox="0 0 16 12"><rect x="0.5" y="-2" width="14" height="12.5" style="fill:#fff;stroke:#4a6ea8;stroke-width:1.5"/><path d="M1 2.5H14M1 6.5H14M5 -2V10M10 -2V10" style="stroke:#6d8fd0;stroke-width:1.5"/><path d="M4 5L13 -3" style="stroke:#222;stroke-width:2.5;shape-rendering:auto"/></svg>
<div class="cb" style="left:99px;width:99px"><span style="left:4px">Standard</span></div><div class="ar" style="left:187px;top:2px"></div>
<div class="sep" style="left:202px"></div><div class="sep" style="left:203px;background:#fff"></div><div class="sep" style="left:209px"></div><div class="sep" style="left:210px;background:#fff"></div><div class="sep" style="left:213px"></div><div class="sep" style="left:214px;background:#fff"></div>
<div class="cb" style="left:217px;width:150px"><span style="left:20px;top:8px">ByLayer</span><i style="position:absolute;left:6px;top:4px;width:10px;height:12px;border:1px solid #000;box-sizing:border-box"></i></div><div class="ar" style="left:354.5px;top:2px"></div>
<div class="sep" style="left:369px"></div><div class="sep" style="left:370px;background:#fff"></div>
<div class="cb" style="left:374px;width:158px"><span style="left:69px;top:8px">ByLayer</span></div><div class="ln" style="left:378px;width:60px;top:3px"></div><div class="ar" style="left:521px;top:2px"></div>
<div class="sep" style="left:534px"></div><div class="sep" style="left:535px;background:#fff"></div>
<div class="cb" style="left:540px;width:124px"><span style="left:43px;top:8px">ByLayer</span></div><div class="ln" style="left:544px;width:34px;top:3px"></div><div class="ar" style="left:651.5px;top:2px"></div>
<div class="sep" style="left:666px"></div><div class="sep" style="left:667px;background:#fff"></div>
<div class="cb" style="left:671px;width:122px;background:#f0f0f0;height:22px;border-width:0 1px 1px 0;border-color:#b0b0b0;font-family:'Liberation Sans','Noto Sans CJK SC',sans-serif;font-size:12px;color:#6d6d6d"><span style="left:8px;top:6px">随颜色</span><b style="position:absolute;right:4px;top:0;width:18px;height:19px;background:#fff"></b></div><div class="ar" style="left:778px;top:2px;border-top-color:#a0a0a0"></div>
</div><div id="tbs"></div>
</body></html>
